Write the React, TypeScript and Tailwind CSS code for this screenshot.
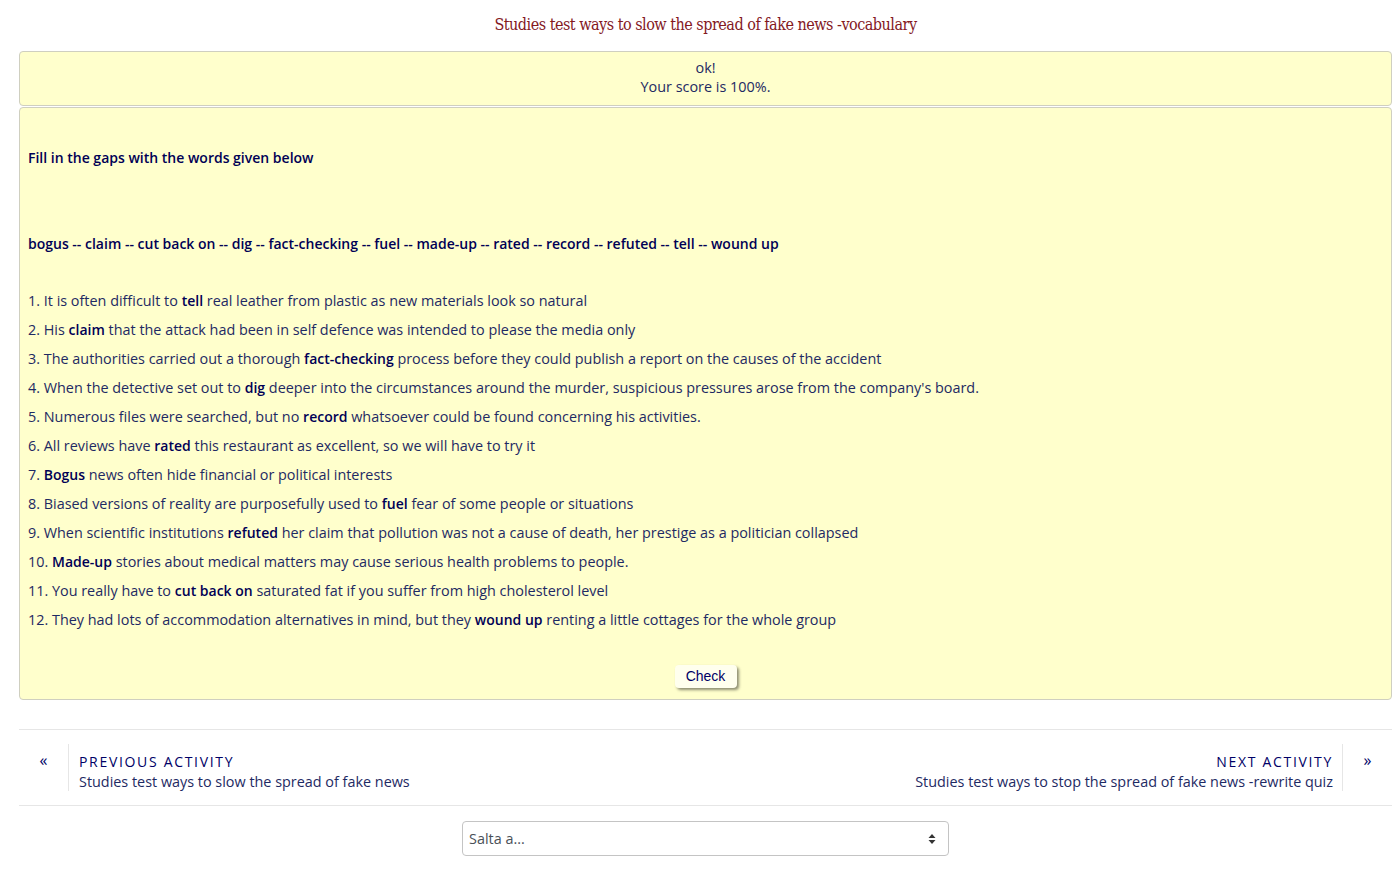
const items: [string, string, string][] = [
  ['1. It is often difficult to ', 'tell', ' real leather from plastic as new materials look so natural'],
  ['2. His ', 'claim', ' that the attack had been in self defence was intended to please the media only'],
  ['3. The authorities carried out a thorough ', 'fact-checking', ' process before they could publish a report on the causes of the accident'],
  ['4. When the detective set out to ', 'dig', " deeper into the circumstances around the murder, suspicious pressures arose from the company's board."],
  ['5. Numerous files were searched, but no ', 'record', ' whatsoever could be found concerning his activities.'],
  ['6. All reviews have ', 'rated', ' this restaurant as excellent, so we will have to try it'],
  ['7. ', 'Bogus', ' news often hide financial or political interests'],
  ['8. Biased versions of reality are purposefully used to ', 'fuel', ' fear of some people or situations'],
  ['9. When scientific institutions ', 'refuted', ' her claim that pollution was not a cause of death, her prestige as a politician collapsed'],
  ['10. ', 'Made-up', ' stories about medical matters may cause serious health problems to people.'],
  ['11. You really have to ', 'cut back on', ' saturated fat if you suffer from high cholesterol level'],
  ['12. They had lots of accommodation alternatives in mind, but they ', 'wound up', ' renting a little cottages for the whole group'],
]

export default function App() {
  return (
    <div className="min-h-[890px] bg-white pl-[19px] pr-[7px] font-['Open_Sans',sans-serif] text-[14.4px] text-[#1e2a63]">
      {/* Title */}
      <h1 className="flex h-[51px] items-center justify-center pb-[2px] font-['DejaVu_Serif_Condensed','DejaVu_Serif',serif] text-[16px] tracking-[-0.5px] text-[#84191f] [font-stretch:condensed]">
        Studies test ways to slow the spread of fake news -vocabulary
      </h1>

      {/* Feedback */}
      <div className="flex h-[55px] flex-col items-center justify-center rounded-[4px] border border-[#cfcfc0] bg-[#ffffcc] pb-[4px] leading-[19px]">
        <div>ok!</div>
        <div>Your score is 100%.</div>
      </div>

      {/* Exercise */}
      <div className="mt-[1px] rounded-[4px] border border-[#cfcfc0] bg-[#ffffcc] px-[8px] pb-[11px] pt-[40px]">
        <p className="text-[14px] leading-[20px] font-semibold text-[#000055]">Fill in the gaps with the words given below</p>
        <p className="mt-[66px] text-[14px] leading-[20px] font-semibold text-[#000055]">
          bogus -- claim -- cut back on -- dig -- fact-checking -- fuel -- made-up -- rated -- record -- refuted -- tell -- wound up
        </p>
        <div className="mt-[32px]">
          {items.map(([a, b, c]) => (
            <div key={a} className="flex h-[29px] items-center">
              <span>
                {a}
                <b className="text-[14px] font-semibold text-[#000055]">{b}</b>
                {c}
              </span>
            </div>
          ))}
        </div>
        <div className="mt-[31px] flex justify-center">
          <button
            type="button"
            className="h-[23px] w-[62px] rounded-[4px] bg-[#ffffee] font-['Liberation_Sans',sans-serif] text-[14px] text-[#000066] shadow-[2px_2px_3px_rgba(0,0,0,0.45)]"
          >
            Check
          </button>
        </div>
      </div>

      {/* Activity navigation */}
      <div className="mt-[29px] flex h-[77px] items-start border-y border-[#e6e6e6] pt-[14px]">
        <div className="flex h-[47px] flex-1 items-start">
          <div className="flex w-[49px] justify-center pt-[6px] text-[16px] leading-[20px] text-[#000066]">«</div>
          <div className="h-[47px] border-l border-[#e6e6e6] pl-[10px] pt-[8px]">
            <div className="text-[14px] leading-[20px] tracking-[0.12em] text-[#000066]">PREVIOUS ACTIVITY</div>
            <div className="leading-[19px]">Studies test ways to slow the spread of fake news</div>
          </div>
        </div>
        <div className="flex h-[47px] flex-1 items-start justify-end">
          <div className="h-[47px] border-r border-[#e6e6e6] pr-[9px] pt-[8px] text-right">
            <div className="text-[14px] leading-[20px] tracking-[0.12em] text-[#000066]">NEXT ACTIVITY</div>
            <div className="leading-[19px]">Studies test ways to stop the spread of fake news -rewrite quiz</div>
          </div>
          <div className="flex w-[49px] justify-center pt-[6px] text-[16px] leading-[20px] text-[#000066]">»</div>
        </div>
      </div>

      {/* Jump to */}
      <div className="mt-[15px] flex justify-center">
        <div className="flex h-[35px] w-[487px] items-center justify-between rounded-[4px] border border-[#c4c4c4] bg-white pl-[6px] pr-[12px] text-[#495057]">
          <span>Salta a...</span>
          <svg width="8" height="12" viewBox="0 0 8 12">
            <path d="M4 1 L7.5 5 H0.5 Z M4 11 L0.5 7 H7.5 Z" fill="#333" />
          </svg>
        </div>
      </div>
    </div>
  )
}
